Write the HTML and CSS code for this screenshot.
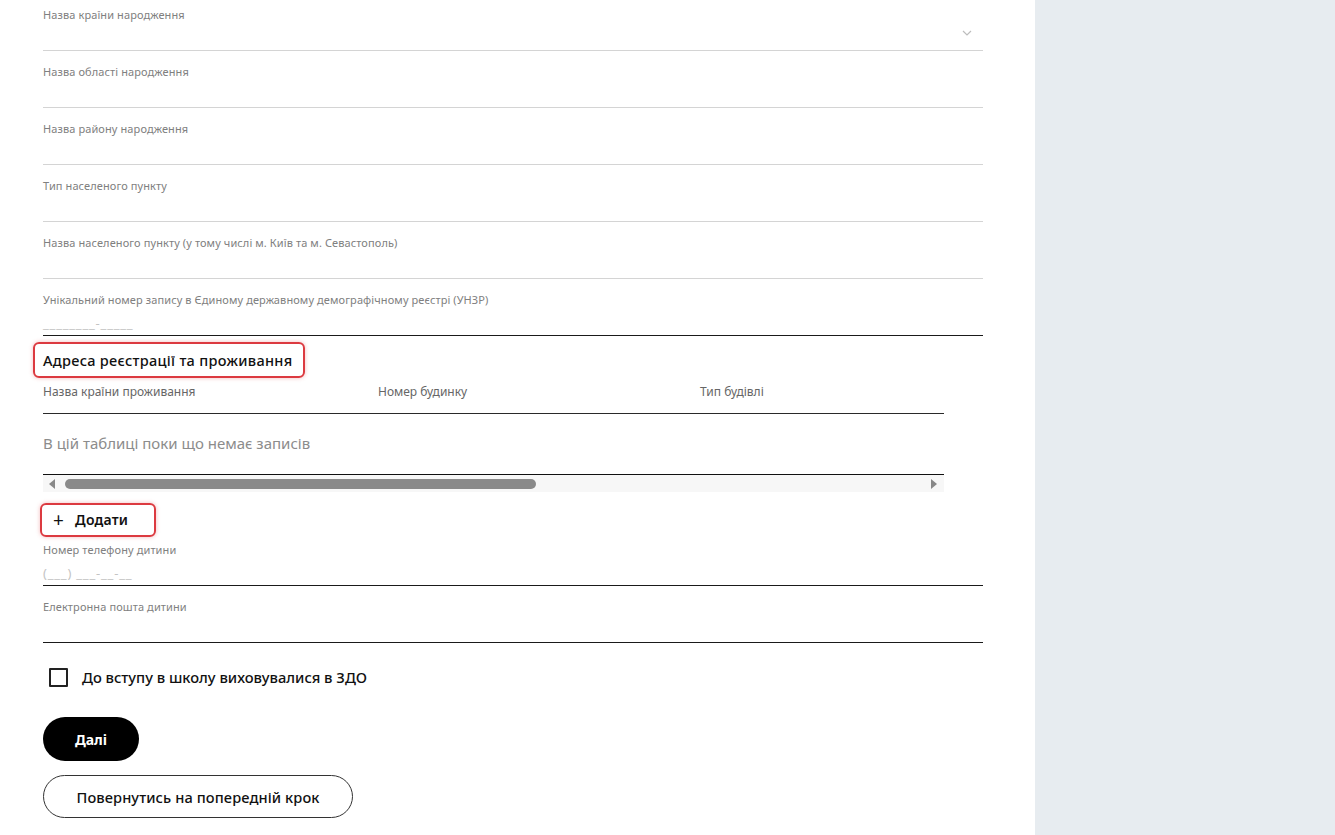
FILE: index.html
```html
<!DOCTYPE html>
<html lang="uk">
<head>
<meta charset="utf-8">
<title>Форма</title>
<link rel="stylesheet" href="styles.css">
</head>
<body>
<div class="page">
  <main class="main">
    <form class="form">
      <div class="field field-select">
        <label class="label">Назва країни народження</label>
        <div class="input"></div>
        <svg class="chevron" width="10" height="6" viewBox="0 0 10 6"><path d="M1 1l4 4 4-4" fill="none" stroke="#bdbdbd" stroke-width="1.2"/></svg>
      </div>
      <div class="field">
        <label class="label">Назва області народження</label>
        <div class="input"></div>
      </div>
      <div class="field">
        <label class="label">Назва району народження</label>
        <div class="input"></div>
      </div>
      <div class="field">
        <label class="label">Тип населеного пункту</label>
        <div class="input"></div>
      </div>
      <div class="field">
        <label class="label">Назва населеного пункту (у тому числі м. Київ та м. Севастополь)</label>
        <div class="input"></div>
      </div>
      <div class="field field-dark">
        <label class="label">Унікальний номер запису в Єдиному державному демографічному реєстрі (УНЗР)</label>
        <div class="input placeholder">________-_____</div>
      </div>

      <div class="section-head">
        <h3 class="section-title highlight">Адреса реєстрації та проживання</h3>
      </div>

      <div class="table">
        <div class="table-head">
          <div class="th th-1">Назва країни проживання</div>
          <div class="th th-2">Номер будинку</div>
          <div class="th th-3">Тип будівлі</div>
        </div>
        <div class="table-empty">В цій таблиці поки що немає записів</div>
        <div class="scrollbar">
          <span class="arrow arrow-left"></span>
          <span class="thumb"></span>
          <span class="arrow arrow-right"></span>
        </div>
      </div>

      <div class="add-row">
        <button type="button" class="add-btn highlight"><span class="plus">+</span>Додати</button>
      </div>

      <div class="field field-dark">
        <label class="label">Номер телефону дитини</label>
        <div class="input placeholder">(___) ___-__-__</div>
      </div>
      <div class="field field-dark">
        <label class="label">Електронна пошта дитини</label>
        <div class="input"></div>
      </div>

      <label class="check-row">
        <span class="checkbox"></span>
        <span class="check-text">До вступу в школу виховувалися в ЗДО</span>
      </label>

      <div class="actions">
        <button type="button" class="btn btn-primary">Далі</button>
        <button type="button" class="btn btn-outline">Повернутись на попередній крок</button>
      </div>
    </form>
  </main>
  <aside class="sidebar"></aside>
</div>
</body>
</html>
```

FILE: styles.css
```css
* { box-sizing: border-box; }
html, body { margin: 0; padding: 0; }
body {
  font-family: "Noto Sans", "Liberation Sans", sans-serif;
  color: #111;
  background: #fff;
  overflow: hidden;
}
.page {
  display: flex;
  width: 1335px;
  height: 835px;
}
.main {
  width: 1035px;
  padding-left: 43px;
  background: #fff;
}
.sidebar {
  flex: 1;
  background: #e7ecf0;
}
.form {
  width: 940px;
  margin-top: -6px;
  display: flex;
  flex-direction: column;
}
.field {
  position: relative;
  height: 57px;
  padding-top: 14px;
  border-bottom: 1px solid #d4d4d4;
}
.field-dark { border-bottom-color: #1a1a1a; }
.label {
  display: block;
  font-size: 11px;
  line-height: 14px;
  color: #808080;
  letter-spacing: 0.1px;
}
.input {
  height: 28px;
  padding-top: 8px;
  font-size: 13px;
  line-height: 16px;
}
.placeholder {
  color: #c4c4c4;
  letter-spacing: 0.8px;
}
.chevron {
  position: absolute;
  right: 11px;
  top: 36px;
}
.section-head {
  padding-top: 7px;
  display: flex;
}
.section-title {
  margin: 0;
  font-size: 14.5px;
  font-weight: 500;
  line-height: 34px;
  height: 34px;
  color: #111;
  letter-spacing: 0.3px;
}
.highlight { position: relative; }
.highlight::after {
  content: "";
  position: absolute;
  border: 2px solid #dc3a40;
  border-radius: 6px;
  box-shadow: 0 0 4px rgba(220, 58, 64, 0.35);
  pointer-events: none;
}
.section-title.highlight::after {
  left: -10px;
  right: -13px;
  top: -1px;
  bottom: -1px;
}
.table { width: 901px; }
.table-head {
  display: flex;
  height: 37px;
  padding-top: 7px;
  border-bottom: 1px solid #2a2a2a;
  font-size: 12px;
  line-height: 16px;
  color: #666;
}
.th-1 { width: 335px; }
.th-2 { width: 322px; }
.th-3 { flex: 1; }
.table-empty {
  height: 61px;
  padding-top: 20px;
  font-size: 15px;
  line-height: 18px;
  color: #8c8c8c;
  border-bottom: 1px solid #111;
}
.scrollbar {
  position: relative;
  height: 17px;
  background: #f7f7f7;
  display: flex;
  align-items: center;
}
.arrow {
  width: 0;
  height: 0;
  border-top: 5px solid transparent;
  border-bottom: 5px solid transparent;
}
.arrow-left {
  margin-left: 6px;
  border-right: 6px solid #888;
}
.arrow-right {
  margin-left: auto;
  margin-right: 7px;
  border-left: 6px solid #888;
}
.thumb {
  margin-left: 10px;
  width: 471px;
  height: 10px;
  border-radius: 5px;
  background: #8a8a8a;
}
.add-row {
  height: 37px;
  display: flex;
  align-items: flex-end;
}
.add-btn {
  border: 0;
  background: transparent;
  font-family: inherit;
  font-size: 14px;
  font-weight: 600;
  color: #111;
  padding: 0 0 1px 10px;
  height: 18px;
  line-height: 18px;
  display: flex;
  align-items: center;
  cursor: pointer;
  letter-spacing: 0.2px;
}
.add-btn .plus {
  font-weight: 400;
  font-size: 19px;
  margin-right: 11px;
  line-height: 18px;
}
.add-btn.highlight::after {
  left: -3px;
  right: -28px;
  top: -8px;
  bottom: -8px;
}
.check-row {
  display: flex;
  align-items: center;
  margin-top: 24px;
  padding-left: 6px;
  height: 20px;
}
.checkbox {
  width: 19px;
  height: 19px;
  border: 2px solid #222;
  border-radius: 1px;
  margin-right: 14px;
}
.check-text {
  font-size: 14.7px;
  font-weight: 500;
  color: #111;
}
.actions {
  margin-top: 30px;
  display: flex;
  flex-direction: column;
  align-items: flex-start;
  gap: 14px;
}
.btn {
  font-family: inherit;
  font-size: 14px;
  border-radius: 22px;
  cursor: pointer;
}
.btn-primary {
  width: 96px;
  height: 44px;
  background: #000;
  color: #fff;
  border: 0;
  font-weight: 700;
}
.btn-outline {
  width: 310px;
  height: 43px;
  background: #fff;
  color: #111;
  border: 1px solid #333;
  font-weight: 500;
  font-size: 14.6px;
  letter-spacing: 0.1px;
}
```
